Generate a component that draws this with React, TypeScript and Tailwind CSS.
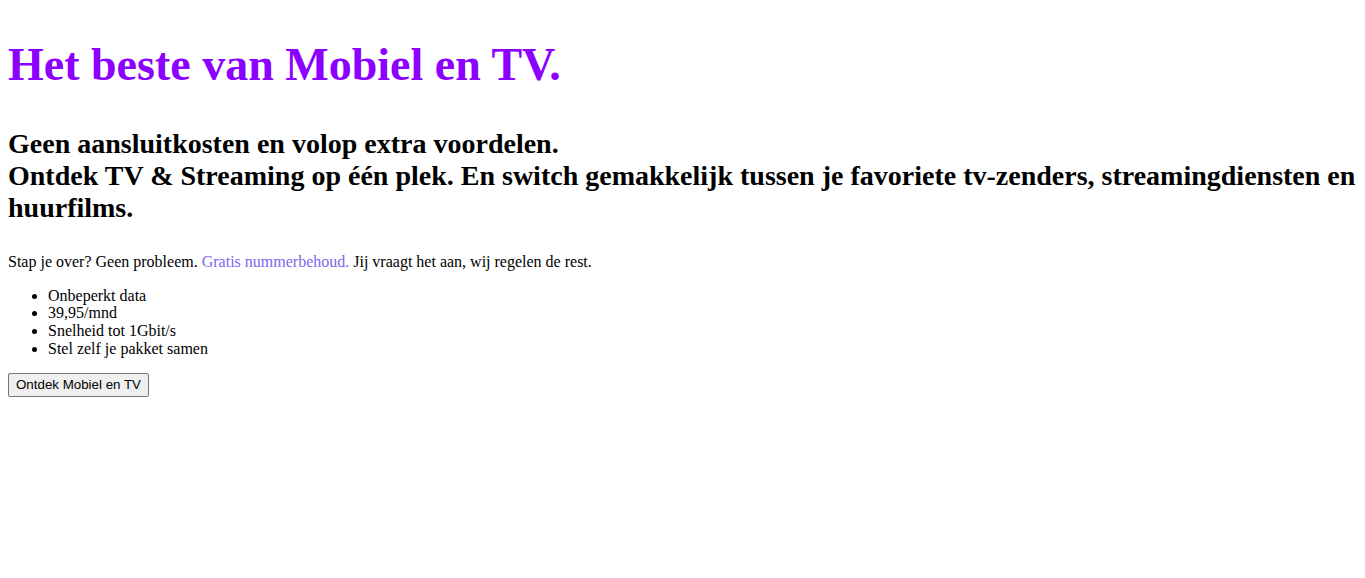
export default function App() {
  return (
    <div className="p-2 text-black text-[16px] leading-normal">
      <div className="font-['Liberation_Serif',serif]">
        <h1 className="text-[46px] leading-[1.15] font-bold text-[#8b00ff] mt-[31px] mb-[36px]">Het beste van Mobiel en TV.</h1>
        <h2 className="text-[28px] leading-[1.15] font-bold mt-[23px] mb-[29px]">
          Geen aansluitkosten en volop extra voordelen.
          <br />
          Ontdek TV &amp; Streaming op één plek. En switch gemakkelijk tussen je favoriete tv-zenders, streamingdiensten en huurfilms.
        </h2>
        <p className="mt-4 mb-[15px] leading-[1.15]">
          Stap je over? Geen probleem. <span className="text-[#7b68ee]">Gratis nummerbehoud.</span> Jij vraagt het aan, wij regelen de rest.
        </p>
        <ul className="list-disc pl-10 mt-[15px] mb-[14px] leading-[1.1]">
          <li>Onbeperkt data</li>
          <li>39,95/mnd</li>
          <li>Snelheid tot 1Gbit/s</li>
          <li>Stel zelf je pakket samen</li>
        </ul>
      </div>
      <button className="font-['Liberation_Sans',Arial,sans-serif] text-[13.33px] leading-normal bg-[#efefef] border border-[#767676] rounded-[2px] px-[7px] py-[1px]">
        Ontdek Mobiel en TV
      </button>
    </div>
  );
}
